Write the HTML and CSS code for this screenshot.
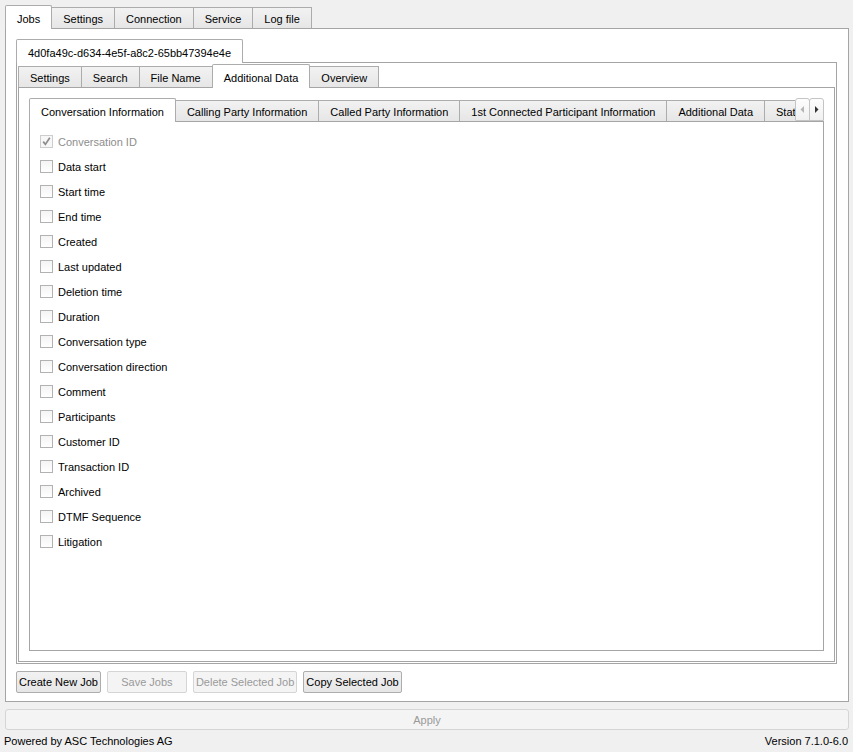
FILE: index.html
```html
<!DOCTYPE html>
<html>
<head>
    <meta charset="utf-8">
    <link rel="stylesheet" href="styles.css">
</head>
<body>
<div class="app">
    <div class="tabbar top-tabs">
        <div class="tab selected">Jobs</div>
        <div class="tab">Settings</div>
        <div class="tab">Connection</div>
        <div class="tab">Service</div>
        <div class="tab">Log file</div>
    </div>
    <div class="pane main-pane">
        <div class="tabbar job-tabs">
            <div class="tab selected">4d0fa49c-d634-4e5f-a8c2-65bb47394e4e</div>
        </div>
        <div class="pane job-pane">
            <div class="tabbar sub-tabs">
                <div class="tab">Settings</div>
                <div class="tab">Search</div>
                <div class="tab">File Name</div>
                <div class="tab selected">Additional Data</div>
                <div class="tab">Overview</div>
            </div>
            <div class="pane sub-pane">
                <div class="inner-bar">
                    <div class="tabbar inner-tabs">
                        <div class="tab selected">Conversation Information</div>
                        <div class="tab">Calling Party Information</div>
                        <div class="tab">Called Party Information</div>
                        <div class="tab">1st Connected Participant Information</div>
                        <div class="tab">Additional Data</div>
                        <div class="tab">Statistics</div>
                    </div>
                    <div class="scroll-btns">
                        <div class="scroll-btn disabled">
                            <svg width="5" height="7" viewBox="0 0 5 7"><polygon points="4,0 4,7 0.5,3.5" fill="#b4b4b4"/></svg>
                        </div>
                        <div class="scroll-btn">
                            <svg width="5" height="7" viewBox="0 0 5 7"><polygon points="1,0 1,7 4.5,3.5" fill="#333"/></svg>
                        </div>
                    </div>
                </div>
                <div class="pane inner-pane">
                    <div class="check-row disabled">
                        <span class="box checked">
                            <svg width="11" height="11" viewBox="0 0 11 11"><polyline points="2.2,5.6 4.4,8.4 8.8,1.8" fill="none" stroke="#8c8c8c" stroke-width="1.7"/></svg>
                        </span>
                        Conversation ID
                    </div>
                    <div class="check-row"><span class="box"></span>Data start</div>
                    <div class="check-row"><span class="box"></span>Start time</div>
                    <div class="check-row"><span class="box"></span>End time</div>
                    <div class="check-row"><span class="box"></span>Created</div>
                    <div class="check-row"><span class="box"></span>Last updated</div>
                    <div class="check-row"><span class="box"></span>Deletion time</div>
                    <div class="check-row"><span class="box"></span>Duration</div>
                    <div class="check-row"><span class="box"></span>Conversation type</div>
                    <div class="check-row"><span class="box"></span>Conversation direction</div>
                    <div class="check-row"><span class="box"></span>Comment</div>
                    <div class="check-row"><span class="box"></span>Participants</div>
                    <div class="check-row"><span class="box"></span>Customer ID</div>
                    <div class="check-row"><span class="box"></span>Transaction ID</div>
                    <div class="check-row"><span class="box"></span>Archived</div>
                    <div class="check-row"><span class="box"></span>DTMF Sequence</div>
                    <div class="check-row"><span class="box"></span>Litigation</div>
                </div>
            </div>
        </div>
        <div class="job-buttons">
            <button class="btn">Create New Job</button>
            <button class="btn" disabled>Save Jobs</button>
            <button class="btn" disabled>Delete Selected Job</button>
            <button class="btn">Copy Selected Job</button>
        </div>
    </div>
    <button class="btn apply" disabled>Apply</button>
    <div class="footer">
        <span>Powered by ASC Technologies AG</span>
        <span>Version 7.1.0-6.0</span>
    </div>
</div>
</body>
</html>
```

FILE: styles.css
```css
* {
    box-sizing: border-box;
}

body {
    margin: 0;
    background-color: #f0f0f0;
    font-family: "Liberation Sans", Arial, sans-serif;
    font-size: 11px;
    color: #000;
}

.app {
    padding: 0 4px 0 5px;
}

/* tab bars */
.tabbar {
    display: flex;
    align-items: flex-end;
    position: relative;
    z-index: 1;
    margin-bottom: -1px;
}

.tab {
    height: 21px;
    margin-bottom: 1px;
    margin-left: -1px;
    padding: 2px 11px 0;
    display: flex;
    align-items: center;
    white-space: nowrap;
    border: 1px solid #acacac;
    border-bottom: none;
    background: linear-gradient(#f2f2f2, #e6e6e6);
}

.tab:first-child {
    margin-left: 0;
}

.tab.selected {
    height: 24px;
    margin-bottom: 0;
    padding-top: 3px;
    background: #fff;
    border-radius: 2px 2px 0 0;
    position: relative;
    z-index: 1;
}

.top-tabs {
    padding-top: 5px;
}

/* panes */
.pane {
    background-color: #fff;
    border: 1px solid #a5a5a5;
}

.main-pane {
    padding: 10px 11px 8px 10px;
}

.job-pane {
    padding: 1px;
}

.sub-pane {
    padding: 10px;
}

.inner-bar {
    display: flex;
    align-items: flex-end;
    position: relative;
    z-index: 1;
    margin-bottom: -1px;
}

.inner-bar .inner-tabs {
    flex: 1;
    min-width: 0;
    height: 24px;
    overflow: hidden;
    margin-bottom: 0;
}

.scroll-btns {
    display: flex;
    margin-bottom: 1px;
}

.scroll-btn {
    width: 15px;
    height: 23px;
    display: flex;
    align-items: center;
    justify-content: center;
    border: 1px solid #c4c4c4;
    border-radius: 3px 3px 0 0;
    background: linear-gradient(#fdfdfd, #f0f0f0);
}

.scroll-btn + .scroll-btn {
    margin-left: -1px;
}

.inner-pane {
    height: 530px;
    padding: 7px 10px;
}

/* checkboxes */
.check-row {
    height: 25px;
    display: flex;
    align-items: center;
    gap: 5px;
}

.check-row.disabled {
    color: #8d8d8d;
}

.box {
    width: 13px;
    height: 13px;
    display: flex;
    align-items: center;
    justify-content: center;
    border: 1px solid #b2b2b2;
    background: linear-gradient(#f4f4f4, #fff);
}

.box.checked {
    border-color: #cdcdcd;
    background: #f7f7f7;
}

/* buttons */
.job-buttons {
    display: flex;
    gap: 6px;
    margin-top: 7px;
}

.btn {
    height: 22px;
    min-width: 80px;
    padding: 0 2px;
    font-family: inherit;
    font-size: 11px;
    color: #000;
    border: 1px solid #adadad;
    border-radius: 2px;
    background: linear-gradient(#f2f2f2, #e6e6e6);
}

.btn:disabled {
    color: #9a9a9a;
    border-color: #d5d5d5;
    background: #f4f4f4;
}

.apply {
    display: block;
    width: 100%;
    height: 21px;
    margin-top: 7px;
    border-radius: 3px;
    border-color: #cbcbcb;
    background: linear-gradient(#f8f8f8, #ececec);
}

.footer {
    height: 22px;
    margin-left: -1px;
    padding-right: 1px;
    display: flex;
    align-items: center;
    justify-content: space-between;
}
```
